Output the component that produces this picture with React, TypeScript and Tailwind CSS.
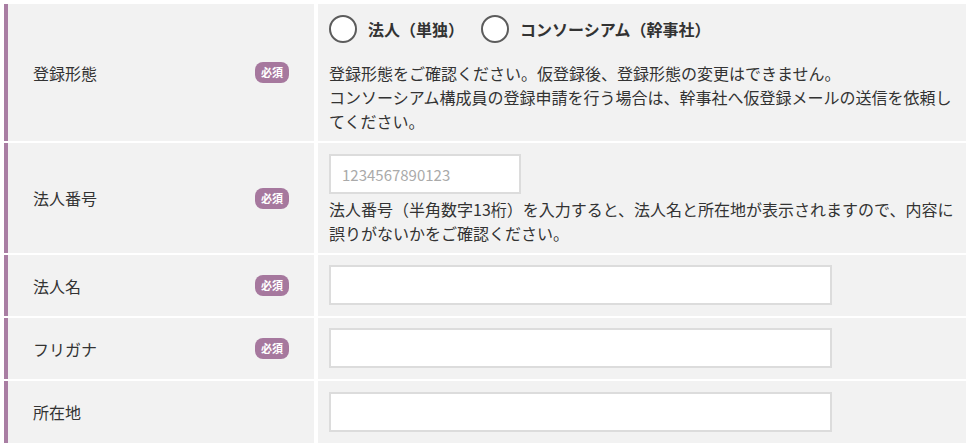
import React from "react";

/**
 * App.tsx — 仮登録フォーム (registration form table)
 */

const FONT = { fontFamily: '"Noto Sans CJK JP", "Noto Sans", sans-serif' };

function Badge() {
  return (
    <span className="inline-flex h-[21px] w-[34px] items-center justify-center rounded-[8px] bg-[#a6789e] text-[11px] font-bold leading-none text-white">
      必須
    </span>
  );
}

function Row({
  label,
  required,
  children,
  contentClass,
}: {
  label: string;
  required?: boolean;
  children: React.ReactNode;
  contentClass: string;
}) {
  return (
    <div className="flex gap-[4px]">
      <div className="flex w-[310px] shrink-0 items-center justify-between border-l-4 border-[#a97ea3] bg-[#f2f2f2] pl-[25px] pr-[25px]">
        <span className="text-[16px] text-[#333]">{label}</span>
        {required && <Badge />}
      </div>
      <div className={`w-[648px] bg-[#f2f2f2] px-[11px] ${contentClass}`}>{children}</div>
    </div>
  );
}

function Radio({ label }: { label: string }) {
  return (
    <label className="flex items-center gap-[11px]">
      <span className="h-[28px] w-[28px] rounded-full border-2 border-[#5c5c5c] bg-white" />
      <span className="text-[16px] font-bold text-[#333]">{label}</span>
    </label>
  );
}

function TextInput({ width, placeholder }: { width: string; placeholder?: string }) {
  return (
    <input
      type="text"
      placeholder={placeholder}
      className={`${width} block h-[40px] border-2 border-[#dcdcdc] bg-white px-[11px] text-[15px] text-[#333] outline-none placeholder:text-[#aaaaaa]`}
      style={FONT}
    />
  );
}

export default function App() {
  return (
    <div className="min-h-screen bg-white pl-[4px] pt-[4px]" style={FONT}>
      <div className="flex flex-col gap-[2px]">
        <Row label="登録形態" required contentClass="h-[137px] pt-[11px]">
          <div className="flex items-center gap-[17px]">
            <Radio label="法人（単独）" />
            <Radio label="コンソーシアム（幹事社）" />
          </div>
          <p className="mt-[18px] text-[16px] leading-[24px] text-[#333]">
            登録形態をご確認ください。仮登録後、登録形態の変更はできません。
            <br />
            コンソーシアム構成員の登録申請を行う場合は、幹事社へ仮登録メールの送信を依頼してください。
          </p>
        </Row>
        <Row label="法人番号" required contentClass="h-[110px] pt-[11px]">
          <TextInput width="w-[192px]" placeholder="1234567890123" />
          <p className="mt-[3px] text-[16px] leading-[24px] text-[#333]">
            法人番号（半角数字13桁）を入力すると、法人名と所在地が表示されますので、内容に誤りがないかをご確認ください。
          </p>
        </Row>
        <Row label="法人名" required contentClass="h-[61px] pt-[10px]">
          <TextInput width="w-[503px]" />
        </Row>
        <Row label="フリガナ" required contentClass="h-[61px] pt-[10px]">
          <TextInput width="w-[503px]" />
        </Row>
        <Row label="所在地" contentClass="h-[62px] pt-[11px]">
          <TextInput width="w-[503px]" />
        </Row>
      </div>
    </div>
  );
}
